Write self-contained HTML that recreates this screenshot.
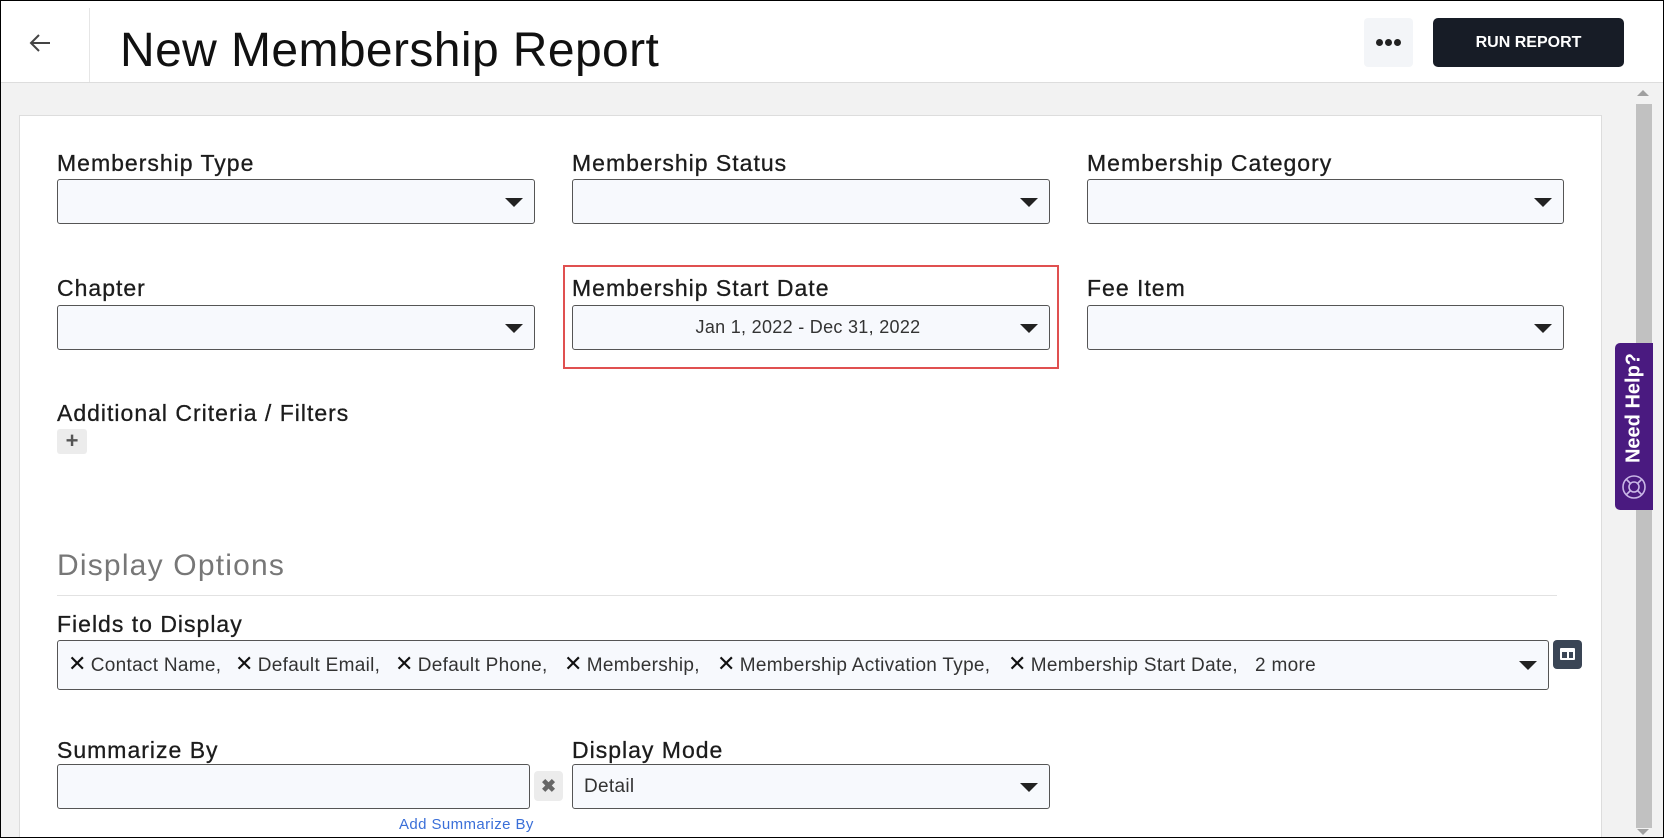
<!DOCTYPE html>
<html style="overflow:hidden;width:1664px;height:838px"><head><meta charset="utf-8"><style>
*{box-sizing:border-box;margin:0;padding:0}
body{width:1664px;height:838px;overflow:hidden;background:#fff;font-family:"Liberation Sans",sans-serif;color:#1a1a1a;position:relative}
.a{position:absolute}
.frame{left:0;top:0;width:1664px;height:838px;border:1px solid #000;z-index:50;pointer-events:none}
.lbl{font-size:23px;letter-spacing:1px;color:#1c1c1c;white-space:nowrap;-webkit-text-stroke:.3px #1c1c1c}
.sel{background:#f7f9fd;border:1px solid #555;border-radius:3px;height:45px}
.car{position:absolute;right:11px;top:50%;margin-top:-4px;width:0;height:0;border-left:9px solid transparent;border-right:9px solid transparent;border-top:9px solid #222}
.tag{font-size:19px;color:#333;white-space:nowrap;top:650px;line-height:28px;letter-spacing:.3px}
.x{font-size:22px;color:#111;margin-right:4px}
</style></head><body>
<div class="a frame"></div>
<svg class="a" style="left:28px;top:32px" width="24" height="22" viewBox="0 0 24 22"><path d="M22 11H3M11 3L3 11l8 8" fill="none" stroke="#444" stroke-width="2"/></svg>
<div class="a" style="left:89px;top:8px;width:1px;height:75px;background:#e6e6e6"></div>
<div class="a" style="left:120px;top:23px;font-size:48px;letter-spacing:.4px;color:#111;white-space:nowrap">New Membership Report</div>
<div class="a" style="left:1364px;top:18px;width:49px;height:49px;background:#f3f5f8;border-radius:4px"></div>
<div class="a" style="left:1376px;top:39px;width:7px;height:7px;border-radius:50%;background:#222"></div>
<div class="a" style="left:1385px;top:39px;width:7px;height:7px;border-radius:50%;background:#222"></div>
<div class="a" style="left:1394px;top:39px;width:7px;height:7px;border-radius:50%;background:#222"></div>
<div class="a" style="left:1433px;top:18px;width:191px;height:49px;background:#171c26;border-radius:5px;color:#fff;font-weight:bold;font-size:16px;text-align:center;line-height:49px">RUN REPORT</div>
<div class="a" style="left:0;top:82px;width:1664px;height:756px;background:#f2f2f2;border-top:1px solid #ddd"></div>
<div class="a" style="left:1637px;top:90px;width:0;height:0;border-left:6px solid transparent;border-right:6px solid transparent;border-bottom:6px solid #a0a0a0"></div>
<div class="a" style="left:1636px;top:104px;width:16px;height:724px;background:#c1c1c1"></div>
<div class="a" style="left:1637px;top:829px;width:0;height:0;border-left:6px solid transparent;border-right:6px solid transparent;border-top:6px solid #a0a0a0"></div>
<div class="a" style="left:19px;top:115px;width:1583px;height:723px;background:#fff;border:1px solid #ddd;border-bottom:none"></div>
<div class="a lbl" style="left:57px;top:150px">Membership Type</div>
<div class="a lbl" style="left:572px;top:150px">Membership Status</div>
<div class="a lbl" style="left:1087px;top:150px">Membership Category</div>
<div class="a sel" style="left:57px;top:179px;width:478px"><div class="car"></div></div>
<div class="a sel" style="left:572px;top:179px;width:478px"><div class="car"></div></div>
<div class="a sel" style="left:1087px;top:179px;width:477px"><div class="car"></div></div>
<div class="a lbl" style="left:57px;top:275px">Chapter</div>
<div class="a lbl" style="left:572px;top:275px">Membership Start Date</div>
<div class="a lbl" style="left:1087px;top:275px">Fee Item</div>
<div class="a sel" style="left:57px;top:305px;width:478px"><div class="car"></div></div>
<div class="a sel" style="left:572px;top:305px;width:478px;text-align:center;font-size:18px;line-height:43px;color:#333;letter-spacing:.3px"><span style="margin-right:6px">Jan 1, 2022 - Dec 31, 2022</span><div class="car"></div></div>
<div class="a sel" style="left:1087px;top:305px;width:477px"><div class="car"></div></div>
<div class="a" style="left:563px;top:265px;width:496px;height:104px;border:2px solid #e05050"></div>
<div class="a lbl" style="left:57px;top:400px">Additional Criteria / Filters</div>
<div class="a" style="left:57px;top:429px;width:30px;height:25px;background:#ececec;border-radius:3px;color:#555;font-weight:bold;font-size:22px;text-align:center;line-height:24px">+</div>
<div class="a" style="left:57px;top:549px;font-size:30px;color:#777;letter-spacing:1.2px">Display Options</div>
<div class="a" style="left:57px;top:595px;width:1500px;height:1px;background:#e2e2e2"></div>
<div class="a lbl" style="left:57px;top:611px">Fields to Display</div>
<div class="a sel" style="left:57px;top:640px;width:1492px;height:50px"><div class="car"></div></div>
<div class="a tag" style="left:68px"><span class="x">✕</span>Contact Name,</div>
<div class="a tag" style="left:235px"><span class="x">✕</span>Default Email,</div>
<div class="a tag" style="left:395px"><span class="x">✕</span>Default Phone,</div>
<div class="a tag" style="left:564px"><span class="x">✕</span>Membership,</div>
<div class="a tag" style="left:717px"><span class="x">✕</span>Membership Activation Type,</div>
<div class="a tag" style="left:1008px"><span class="x">✕</span>Membership Start Date,</div>
<div class="a tag" style="left:1255px"><span class="x" style="visibility:hidden;margin:0;font-size:22px;width:0;display:inline-block">&#8203;</span>2 more</div>
<div class="a" style="left:1553px;top:640px;width:29px;height:29px;background:#3a4555;border-radius:4px"></div>
<div class="a" style="left:1560px;top:648px;width:15px;height:12px;border:2px solid #fff;border-top-width:4px;border-radius:1px"></div>
<div class="a" style="left:1567px;top:650px;width:2px;height:9px;background:#fff"></div>
<div class="a lbl" style="left:57px;top:737px">Summarize By</div>
<div class="a lbl" style="left:572px;top:737px">Display Mode</div>
<div class="a sel" style="left:57px;top:764px;width:473px"></div>
<div class="a" style="left:534px;top:771px;width:29px;height:30px;background:#ececec;border-radius:4px;color:#666;font-size:18px;font-weight:bold;text-align:center;line-height:30px">✖</div>
<div class="a sel" style="left:572px;top:764px;width:478px;font-size:19px;line-height:43px;padding-left:11px;color:#333;letter-spacing:.3px">Detail<div class="car"></div></div>
<div class="a" style="left:399px;top:816px;font-size:15px;color:#3a6fd8;letter-spacing:.4px">Add Summarize By</div>
<div class="a" style="left:1615px;top:343px;width:38px;height:167px;background:#4a1a80;border-radius:5px 0 0 5px"></div>
<div class="a" style="left:1620px;top:473px;width:28px;height:28px"><svg width="28" height="28" viewBox="0 0 28 28" fill="none" stroke="#c9b6e6" stroke-width="1.6"><circle cx="14" cy="14" r="11"/><circle cx="14" cy="14" r="5"/><path d="M6 6l4.5 4.5M22 6l-4.5 4.5M6 22l4.5-4.5M22 22l-4.5-4.5"/></svg></div>
<div class="a" style="left:1634px;top:408px;transform:translate(-50%,-50%) rotate(-90deg);color:#fff;font-weight:bold;font-size:20px;white-space:nowrap">Need Help?</div>
</body></html>
